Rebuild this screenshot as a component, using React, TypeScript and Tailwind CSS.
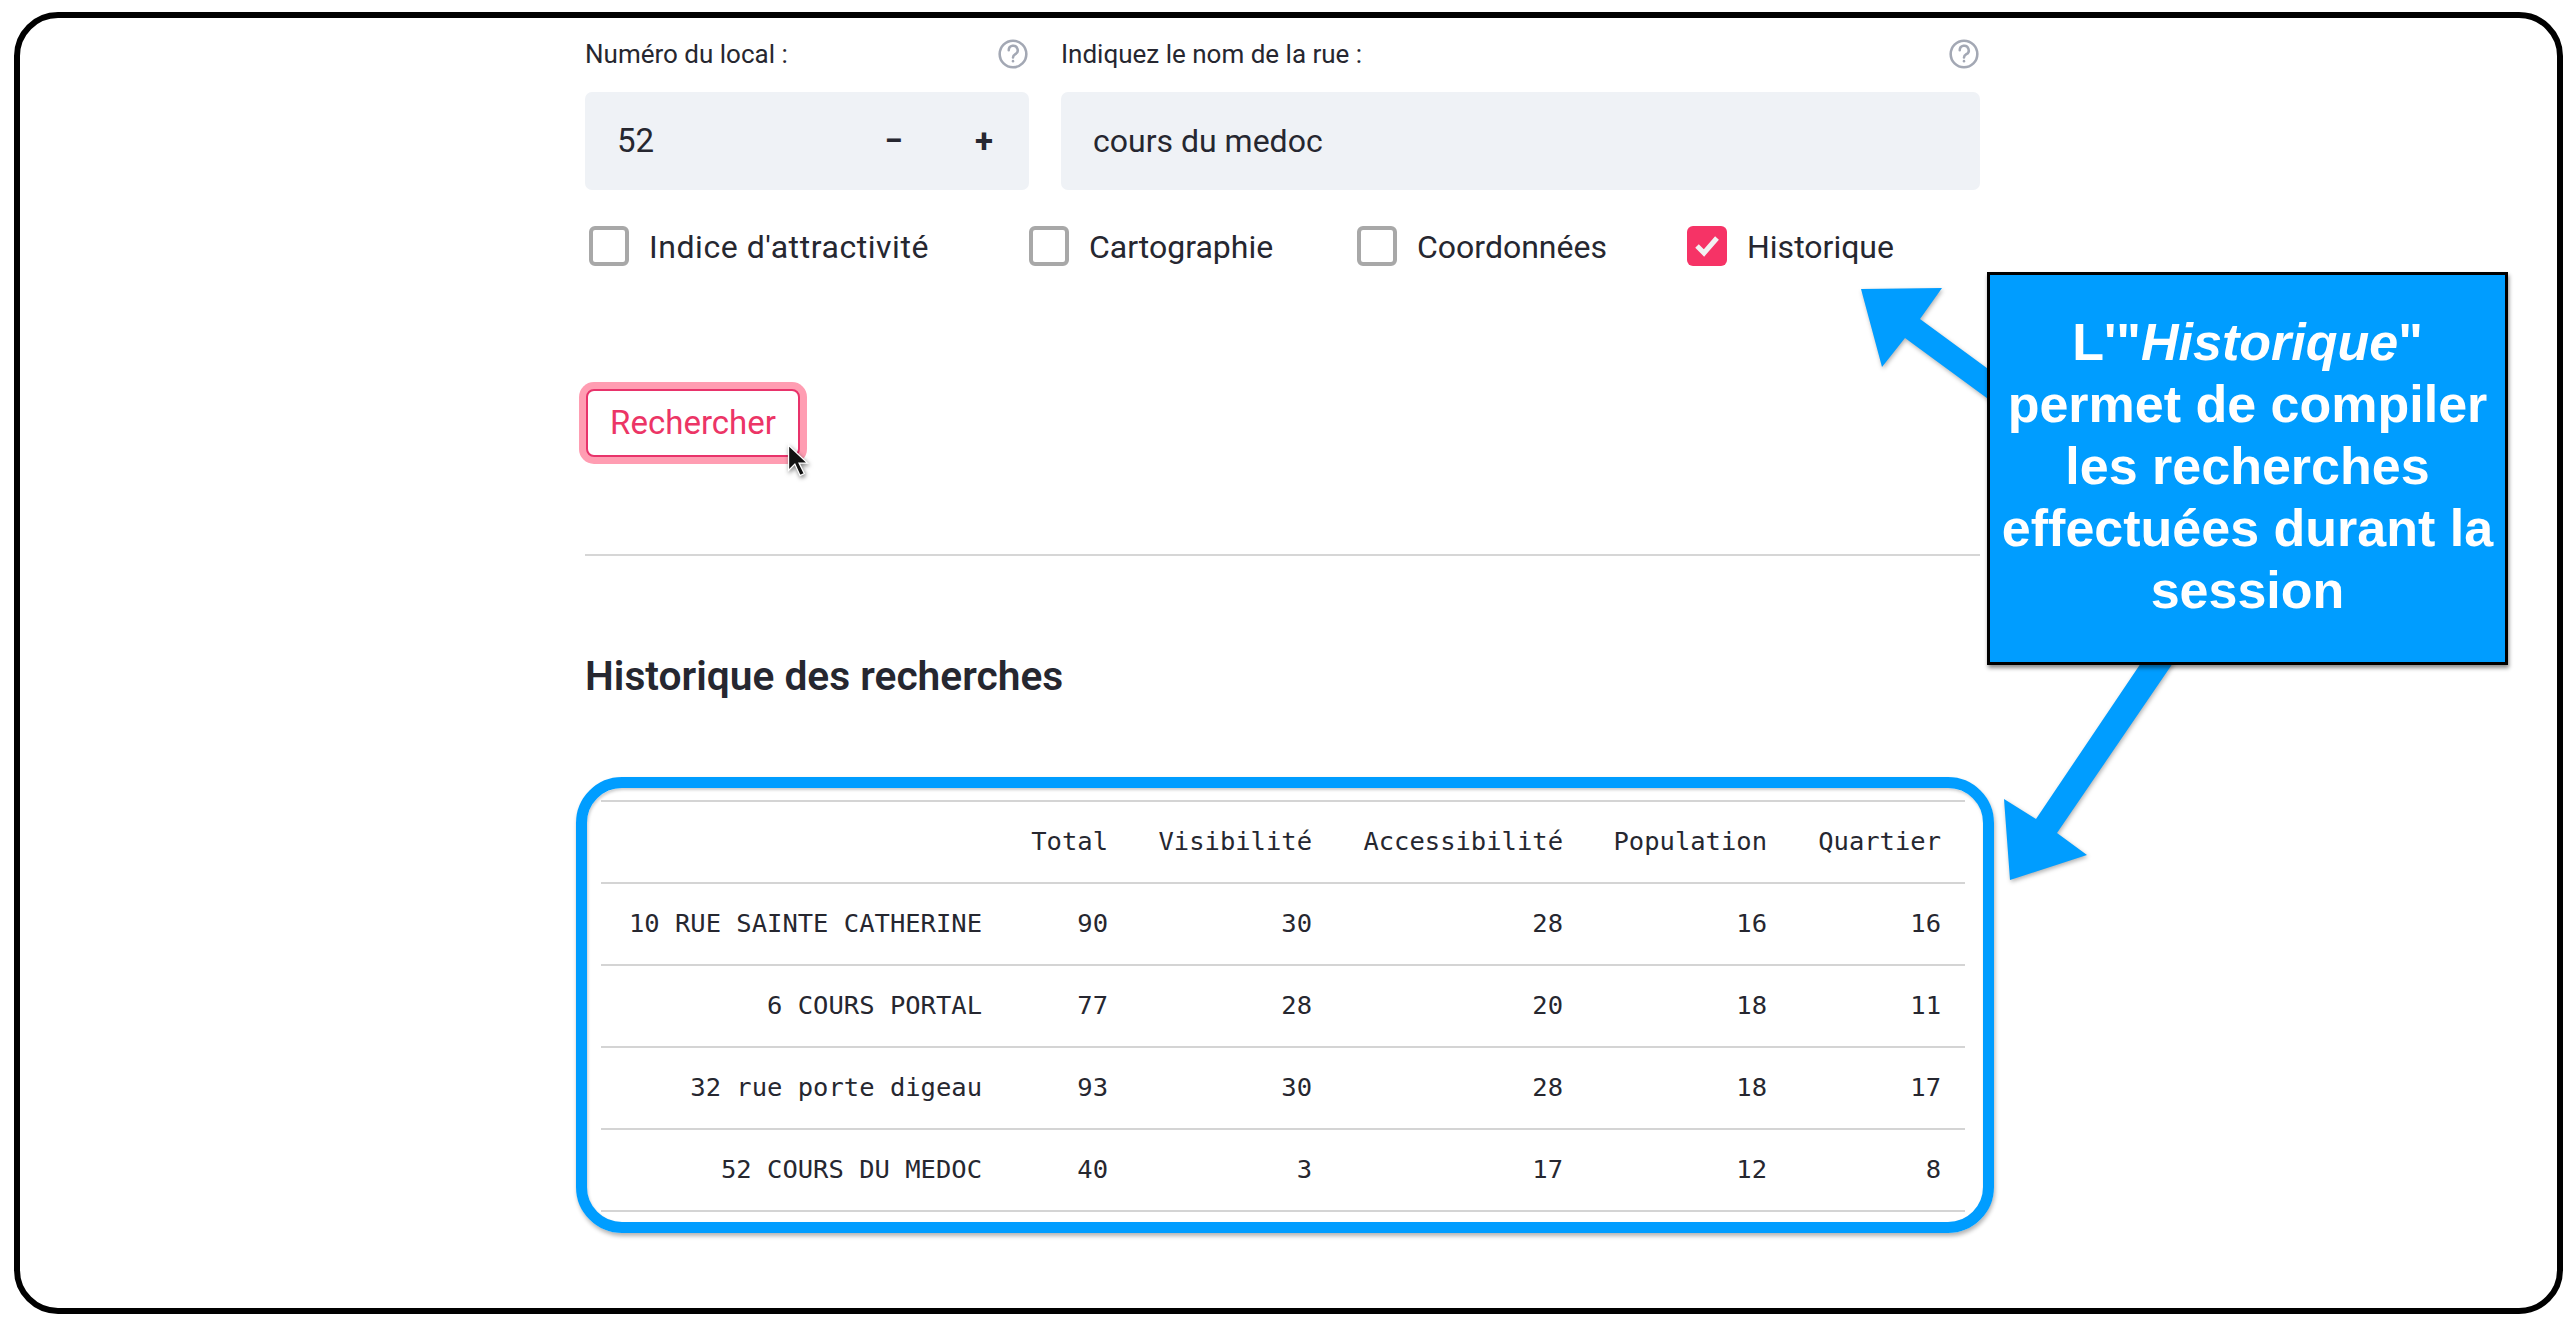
import React from 'react';

const rows = [
  ['10 RUE SAINTE CATHERINE', 90, 30, 28, 16, 16],
  ['6 COURS PORTAL', 77, 28, 20, 18, 11],
  ['32 rue porte digeau', 93, 30, 28, 18, 17],
  ['52 COURS DU MEDOC', 40, 3, 17, 12, 8],
];

const headers = ['', 'Total', 'Visibilité', 'Accessibilité', 'Population', 'Quartier'];
const colWidths = ['w-[405px]', 'w-[126px]', 'w-[204px]', 'w-[251px]', 'w-[204px]', 'w-[174px]'];

const HelpIcon = () => (
  <svg width="32" height="32" viewBox="0 0 30 30" fill="none" stroke="#a3a8b4" strokeWidth="2.4" strokeLinecap="round">
    <circle cx="15" cy="15" r="12.5" />
    <path d="M11 11.5a4.2 4.2 0 1 1 6.2 3.7c-1.4.8-2.2 1.5-2.2 3" />
    <path d="M15 21.6v.2" />
  </svg>
);

const Checkbox = ({ label, checked, className, labelClass = '' }: { label: string; checked?: boolean; className: string; labelClass?: string }) => (
  <div className={`flex items-center ${className}`}>
    {checked ? (
      <div className="w-[40px] h-[40px] rounded-[6px] bg-[#f63366] flex items-center justify-center">
        <svg width="28" height="24" viewBox="0 0 28 24" fill="none" stroke="#f2f2f2" strokeWidth="5">
          <path d="M4 12l7 7L24 4" />
        </svg>
      </div>
    ) : (
      <div className="w-[40px] h-[40px] rounded-[6px] border-[4px] border-[#a8a8a8] bg-white" />
    )}
    <span className={`ml-[20px] pt-[2px] text-[32px] leading-[38px] text-[#262730] ${labelClass}`}>{label}</span>
  </div>
);

const App: React.FC = () => {
  return (
    <div className="relative w-[2575px] h-[1328px] bg-white pl-[14px] pt-[12px] overflow-hidden font-['Roboto',sans-serif]">
      <div className="w-[2549px] h-[1302px] border-[6px] border-black rounded-[44px] pt-[20px] pl-[565px]">
        <div className="w-[1395px]">
          {/* inputs */}
          <div className="flex gap-[32px]">
            <div className="w-[444px]">
              <div className="flex items-center justify-between h-[32px] text-[26px] text-[#262730]">
                <span>Numéro du local :</span>
                <HelpIcon />
              </div>
              <div className="mt-[22px] h-[98px] rounded-[7px] bg-[#eff2f6] flex items-center pl-[32px] text-[33px] text-[#262730]">
                <span className="flex-1">52</span>
                <span className="w-[90px] text-center font-bold">−</span>
                <span className="w-[90px] text-center font-bold">+</span>
              </div>
            </div>
            <div className="w-[919px]">
              <div className="flex items-center justify-between h-[32px] text-[26px] text-[#262730]">
                <span>Indiquez le nom de la rue :</span>
                <HelpIcon />
              </div>
              <div className="mt-[22px] h-[98px] rounded-[7px] bg-[#eff2f6] flex items-center pl-[32px] text-[32px] text-[#262730]">
                cours du medoc
              </div>
            </div>
          </div>

          {/* options */}
          <div className="flex mt-[36px] pl-[4px]">
            <Checkbox label="Indice d'attractivité" className="w-[440px]" labelClass="tracking-[0.55px]" />
            <Checkbox label="Cartographie" className="w-[328px]" />
            <Checkbox label="Coordonnées" className="w-[330px]" />
            <Checkbox label="Historique" checked className="w-[240px]" />
          </div>

          <button className="block mt-[123px] ml-[1px] w-[214px] h-[68px] rounded-[8px] border-2 border-[#e8336b] ring-[7px] ring-[#ff9db2] bg-white text-[33px] text-[#ec3566]">
            Rechercher
          </button>

          <div className="mt-[97px] h-[2px] bg-[#d6d6d6]" />

          <h2 className="mt-[95px] h-[50px] text-[40.7px] leading-[50px] font-semibold text-[#262730]">Historique des recherches</h2>

          {/* table */}
          <table className="mt-[99px] ml-[16px] w-[1364px] table-fixed border-collapse font-['DejaVu_Sans_Mono',monospace] text-[25.5px] text-[#262730]">
            <thead>
              <tr className="h-[82px] border-y-2 border-[#d4d4d4]">
                {headers.map((h, i) => (
                  <th key={i} className={`${colWidths[i]} pr-[24px] pb-[2px] text-right font-normal`}>{h}</th>
                ))}
              </tr>
            </thead>
            <tbody>
              {rows.map((row, i) => (
                <tr key={i} className="h-[82px] border-b-2 border-[#d4d4d4]">
                  {row.map((cell, j) => (
                    <td key={j} className="pr-[24px] pb-[2px] text-right">{cell}</td>
                  ))}
                </tr>
              ))}
            </tbody>
          </table>
        </div>
      </div>

      {/* annotation arrows */}
      <svg className="absolute inset-0 drop-shadow-[1px_2px_2px_rgba(0,0,0,0.3)]" width="2575" height="1328" viewBox="0 0 2575 1328" fill="#009dff">
        <polygon points="1861,289 1942,288 1920,319 1995,374 1995,404 1905,338 1882,367" />
        <polygon points="2143,660 2175,660 2057,833 2087,855 2010,880 2004,799 2036,819" />
      </svg>

      {/* table highlight */}
      <div className="absolute left-[576px] top-[777px] w-[1418px] h-[456px] rounded-[46px] border-[11px] border-[#009dff] shadow-[1px_3px_4px_rgba(0,0,0,0.3),inset_1px_2px_3px_rgba(0,0,0,0.2)]" />

      {/* callout */}
      <div className="absolute left-[1987px] top-[272px] w-[521px] h-[393px] border-[3px] border-black bg-[#009dff] shadow-[1px_3px_4px_rgba(0,0,0,0.45)] flex items-center justify-center text-center font-['Liberation_Sans',sans-serif] font-bold text-[52px] leading-[62px] text-white">
        <p className="pb-[6px]">
          L'"<em>Historique</em>"<br />
          permet de compiler<br />
          les recherches<br />
          effectuées durant la<br />
          session
        </p>
      </div>

      {/* mouse cursor */}
      <svg className="absolute left-[783px] top-[441px] drop-shadow-[1px_2px_2px_rgba(0,0,0,0.5)]" width="30" height="42" viewBox="0 0 28 40">
        <path d="M5 4v24l6-6 5 11 4-2-5-10h8z" fill="#111" stroke="#fff" strokeWidth="1.2" />
      </svg>
    </div>
  );
};

export default App;
